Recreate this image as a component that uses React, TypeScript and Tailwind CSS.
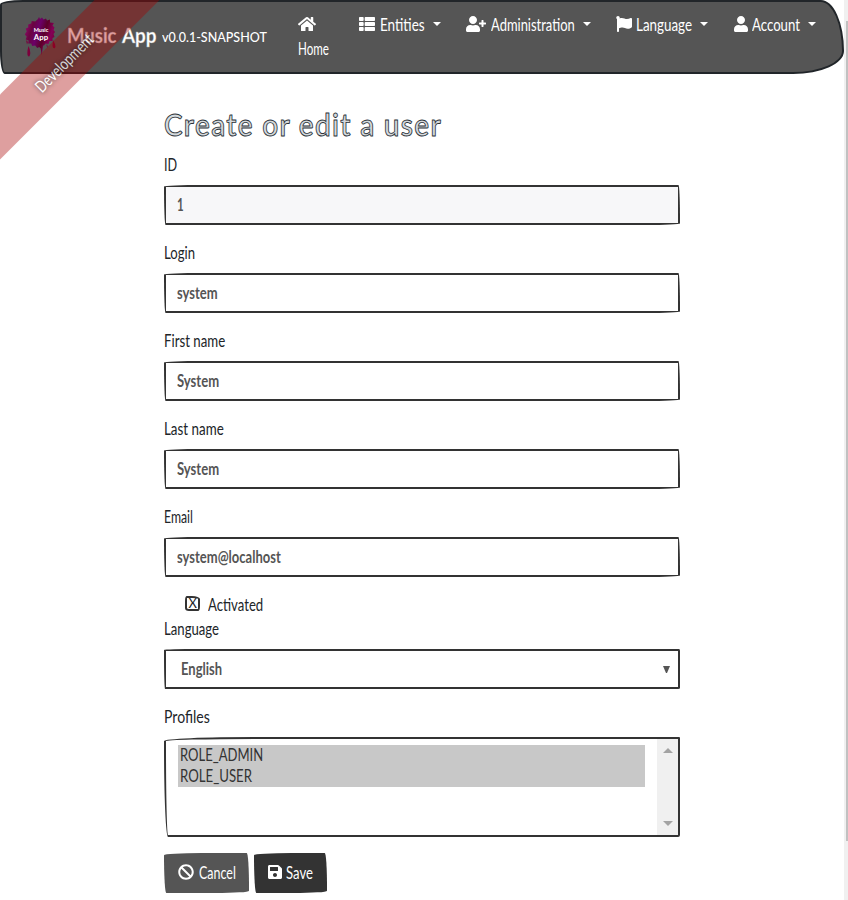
import { useLayoutEffect, useRef, useState } from 'react';
import type { ReactNode } from 'react';
import { FaBan, FaFlag, FaHome, FaSave, FaThList, FaUser, FaUserPlus } from 'react-icons/fa';

const sketch = 'rounded-[255px_10px_225px_10px/10px_225px_10px_255px]';
const sketchButton = 'rounded-[255px_15px_225px_15px/15px_225px_15px_255px]';

/* A run of narrow lettering, condensed to the given width. */
function Narrow({ w, children, className = '' }: { w: number; children: string; className?: string }) {
  const ref = useRef<HTMLSpanElement>(null);
  const [scale, setScale] = useState(1);
  useLayoutEffect(() => {
    if (ref.current) setScale(w / ref.current.offsetWidth);
  }, [w]);
  return (
    <span className={`inline-block whitespace-nowrap ${className}`} style={{ width: w }}>
      <span ref={ref} className="inline-block origin-left" style={{ transform: `scaleX(${scale})` }}>
        {children}
      </span>
    </span>
  );
}

function Caret({ className = '' }: { className?: string }) {
  return <span className={`mt-[9px] h-0 w-0 border-x-[4.8px] border-t-[4.8px] border-x-transparent border-t-white ${className}`} />;
}

function Label({ w, children }: { w: number; children: string }) {
  return (
    <label className="mb-2 block h-6 text-[#212529]">
      <Narrow w={w}>{children}</Narrow>
    </label>
  );
}

function Field({ label, lw, value, vw, disabled = false }: { label: string; lw: number; value: string; vw: number; disabled?: boolean }) {
  return (
    <div className="mb-4">
      <Label w={lw}>{label}</Label>
      <div className={`flex h-10 items-center border-2 border-[#333] pl-[11px] font-bold text-[#555] ${sketch} ${disabled ? 'bg-[#f7f7f9]' : 'bg-white'}`}>
        <Narrow w={vw}>{value}</Narrow>
      </div>
    </div>
  );
}

function Logo() {
  return (
    <svg className="h-10 w-8 shrink-0" viewBox="0 0 32 40">
      <defs>
        <linearGradient id="splat" x1="0" y1="0.3" x2="1" y2="0.7">
          <stop offset="0" stopColor="#8c0a6a" />
          <stop offset="0.2" stopColor="#6a0440" />
          <stop offset="0.4" stopColor="#6b0068" />
          <stop offset="0.6" stopColor="#5b0028" />
          <stop offset="0.8" stopColor="#850058" />
          <stop offset="1" stopColor="#720030" />
        </linearGradient>
      </defs>
      <path
        fill="url(#splat)"
        d="M13 2l1-2 1 2 2-1.5 1.500 2 2.500-1 1 2 3-1 0 3 4 .5-1.500 2.500 2 2-1 2.500 1.500 2-1.500 2 1 3-2 1 0 3-3 0-1 3-3-.5-1.500 2-1 0-.5 4-.8 6-1-7-1.500-1.500-2 1-2-2.500-3 .5-1-2.500-3 0 .5-3-3-1 1-3-2-2 2-3-1-3 2.500-1 0-3 3-1 .5-2.500 3.500.5z"
      />
      <path fill="#7d003c" d="M3.500 29q2.500 5 1.500 9-1 3-2.500 0-.5-4 1-9zM1 23l2 2-1 2.500zM28 23q3.500 6 2 8-2 1-2.500-2zM22 27l1 4-1.500-2z" />
      <text x="16" y="15" fill="white" textAnchor="middle" fontSize="5.500" fontWeight="700" fontFamily="Lato, sans-serif">Music</text>
      <text x="16" y="23" fill="white" textAnchor="middle" fontSize="7.800" fontWeight="700" fontFamily="Lato, sans-serif">App</text>
    </svg>
  );
}

function NavItem({ icon, label, w, className }: { icon: ReactNode; label: string; w: number; className: string }) {
  return (
    <a className={`flex h-6 shrink-0 items-start ${className}`}>
      {icon}
      <Narrow w={w}>{label}</Narrow>
      <Caret className="ml-[8px]" />
    </a>
  );
}

export default function App() {
  return (
    <div className="relative flex h-[900px] w-[848px] overflow-hidden bg-white font-['Lato','Open_Sans',sans-serif] text-[16.500px] leading-6">
      <div className="w-[844px]">
        <nav className="flex h-[74px] items-start rounded-[25px_25px_55px_5px/5px_55px_25px_25px] border-2 border-[#212529] bg-[#555] text-white">
          <a className="ml-[23px] mt-[15px] flex h-10 w-[244px]">
            <Logo />
            <span className="ml-[10px] mt-[6px] flex whitespace-nowrap">
              <Narrow w={50} className="text-[20px] font-bold [-webkit-text-stroke:0.3px_#aaa]">Music</Narrow>
              <Narrow w={35} className="ml-[5px] text-[20px] font-bold [-webkit-text-stroke:0.3px_#aaa]">App</Narrow>
              <Narrow w={105} className="ml-[5px] mt-[2px] text-[13px] font-medium">v0.0.1-SNAPSHOT</Narrow>
            </span>
          </a>
          <a className="ml-[29px] mt-[14px] w-[61px]">
            <FaHome className="h-4 w-[18px]" />
            <Narrow w={31} className="mt-[5px]">Home</Narrow>
          </a>
          <div className="mt-[11px] flex">
            <NavItem className="w-[107px]" icon={<FaThList className="mr-[5px] mt-[3px] h-4 w-4" />} label="Entities" w={45} />
            <NavItem className="w-[150px]" icon={<FaUserPlus className="mr-[5px] mt-[3px] h-4 w-5" />} label="Administration" w={84} />
            <NavItem className="w-[118px]" icon={<FaFlag className="mr-1 mt-[3px] h-4 w-4" />} label="Language" w={56} />
            <NavItem className="w-[90px]" icon={<FaUser className="mr-1 mt-[3px] h-4 w-[14px]" />} label="Account" w={48} />
          </div>
        </nav>

        <main className="ml-[164px] mt-[31px] w-[516px]">
          <h2 className="mb-[10px] h-[38px] text-[31px] font-semibold leading-[38px] text-[#d5dade] [-webkit-text-stroke:0.9px_#2b3238]">
            <Narrow w={278} className="tracking-[1.500px]">Create or edit a user</Narrow>
          </h2>
          <Field label="ID" lw={13} value="1" vw={7} disabled />
          <Field label="Login" lw={31} value="system" vw={41} />
          <Field label="First name" lw={61} value="System" vw={42} />
          <Field label="Last name" lw={60} value="System" vw={42} />
          <Field label="Email" lw={29} value="system@localhost" vw={104} />
          <div className="flex h-6 items-center pl-[21px] text-[#212529]">
            <span className="mb-[3px] mr-2 flex h-[15px] w-[15px] items-center justify-center rounded-[2px_8px_2px_4px/5px_3px_5px_3px] border-2 border-[#333] text-[13px] leading-none">
              <Narrow w={8}>X</Narrow>
            </span>
            <Narrow w={55}>Activated</Narrow>
          </div>
          <Label w={55}>Language</Label>
          <div className="mb-4 flex h-10 items-center justify-between rounded-[35px_1px_2px_1px/1px_2px_1px_35px] border-2 border-[#333] pl-[15px] pr-2 font-bold text-[#555]">
            <Narrow w={41}>English</Narrow>
            <svg className="h-[7px] w-[7px]" viewBox="0 0 7 7">
              <path d="M0 0H7L4 7H3Z" fill="#555" />
            </svg>
          </div>
          <Label w={46}>Profiles</Label>
          <div className="mb-4 flex h-[100px] justify-between overflow-hidden rounded-[91px_1px_2px_4px/4px_1px_2px_91px] border-2 border-[#333] pl-3 text-[#333]">
            <div className="mt-[6px] h-[42px] w-[467px] bg-[#c8c8c8] pl-[2px] leading-[21px]">
              <div className="h-[21px]"><Narrow w={83} className="align-top">ROLE_ADMIN</Narrow></div>
              <div className="h-[21px]"><Narrow w={72} className="align-top">ROLE_USER</Narrow></div>
            </div>
            <div className="flex w-[21px] flex-col items-center justify-between bg-[#f0f0f0] pb-[9px] pt-[9px]">
              <span className="h-0 w-0 border-x-[5px] border-b-[5px] border-x-transparent border-b-[#a3a3a3]" />
              <span className="h-0 w-0 border-x-[5px] border-t-[5px] border-x-transparent border-t-[#a3a3a3]" />
            </div>
          </div>
          <div className="flex gap-[5px] text-white">
            <button className={`flex h-10 w-[85px] items-center bg-[#555] pl-[14px] ${sketchButton}`}>
              <FaBan className="mb-[3px] mr-[5px] h-4 w-4" />
              <Narrow w={37}>Cancel</Narrow>
            </button>
            <button className={`flex h-10 w-[73px] items-center bg-[#333] pl-[14px] ${sketchButton}`}>
              <FaSave className="mb-[2px] mr-1 h-4 w-[14px]" />
              <Narrow w={27}>Save</Narrow>
            </button>
          </div>
        </main>
      </div>
      <div className="h-full w-1 bg-[#f0f0f0] pl-[2px] pt-[21px]">
        <div className="h-[820px] w-[2px] bg-[#c1c1c1]" />
      </div>
      <div className="absolute -left-[66px] top-[40px] flex h-[46px] w-[260px] -rotate-45 items-center justify-center bg-[#a00]/50 text-white opacity-75 [text-shadow:0_0_5px_#000]">
        <Narrow w={75}>Development</Narrow>
      </div>
    </div>
  );
}
